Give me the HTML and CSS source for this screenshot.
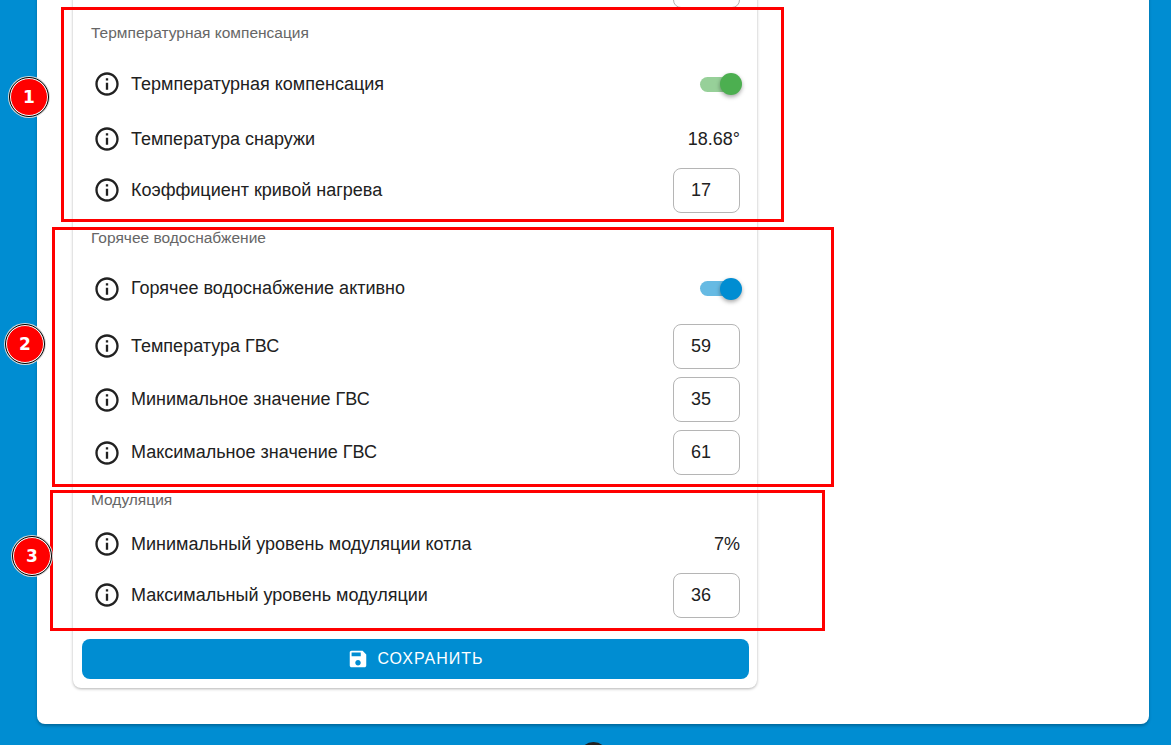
FILE: index.html
```html
<!DOCTYPE html>
<html lang="ru">
  <head>
    <meta charset="UTF-8" />
    <meta name="viewport" content="width=device-width, initial-scale=1.0" />
    <title>Настройки котла</title>
    <link rel="stylesheet" href="styles.css">
  </head>
  <body>
    <svg class="icon-defs" width="0" height="0">
      <symbol id="info" viewBox="0 0 24 24">
        <path d="M11 7h2v2h-2zm0 4h2v6h-2zm1-9C6.48 2 2 6.48 2 12s4.48 10 10 10 10-4.48 10-10S17.52 2 12 2zm0 18c-4.41 0-8-3.59-8-8s3.59-8 8-8 8 3.59 8 8-3.59 8-8 8z" />
      </symbol>
    </svg>
    <div class="panel">
      <div class="card">
        <div class="row row-input">
          <span class="row-label"></span>
          <div class="field"></div>
        </div>

        <h3 class="section-title section-first">Термпературная компенсация</h3>
        <div class="row row-switch">
          <svg class="info"><use href="#info" /></svg>
          <span class="row-label">Термпературная компенсация</span>
          <div class="switch switch-green"><span class="thumb"></span></div>
        </div>
        <div class="row row-value">
          <svg class="info"><use href="#info" /></svg>
          <span class="row-label">Температура снаружи</span>
          <span class="value">18.68°</span>
        </div>
        <div class="row row-input">
          <svg class="info"><use href="#info" /></svg>
          <span class="row-label">Коэффициент кривой нагрева</span>
          <div class="field">17</div>
        </div>

        <h3 class="section-title">Горячее водоснабжение</h3>
        <div class="row row-switch">
          <svg class="info"><use href="#info" /></svg>
          <span class="row-label">Горячее водоснабжение активно</span>
          <div class="switch switch-blue"><span class="thumb"></span></div>
        </div>
        <div class="row row-input">
          <svg class="info"><use href="#info" /></svg>
          <span class="row-label">Температура ГВС</span>
          <div class="field">59</div>
        </div>
        <div class="row row-input">
          <svg class="info"><use href="#info" /></svg>
          <span class="row-label">Минимальное значение ГВС</span>
          <div class="field">35</div>
        </div>
        <div class="row row-input">
          <svg class="info"><use href="#info" /></svg>
          <span class="row-label">Максимальное значение ГВС</span>
          <div class="field">61</div>
        </div>

        <h3 class="section-title section-last">Модуляция</h3>
        <div class="row row-value">
          <svg class="info"><use href="#info" /></svg>
          <span class="row-label">Минимальный уровень модуляции котла</span>
          <span class="value">7%</span>
        </div>
        <div class="row row-input">
          <svg class="info"><use href="#info" /></svg>
          <span class="row-label">Максимальный уровень модуляции</span>
          <div class="field">36</div>
        </div>

        <button class="save">
          <svg class="save-icon" viewBox="0 0 24 24">
            <path d="M17 3H5c-1.11 0-2 .9-2 2v14c0 1.1.89 2 2 2h14c1.1 0 2-.9 2-2V7l-4-4zm-5 16c-1.66 0-3-1.34-3-3s1.34-3 3-3 3 1.34 3 3-1.34 3-3 3zm3-10H5V5h10v4z" />
          </svg>
          Сохранить
        </button>
      </div>
    </div>

    <!-- annotations drawn over the screenshot -->
    <div class="mark mark-1"></div>
    <div class="mark mark-2"></div>
    <div class="mark mark-3"></div>
    <div class="badge badge-1">1</div>
    <div class="badge badge-2">2</div>
    <div class="badge badge-3">3</div>
    <div class="fab"></div>
  </body>
</html>
```

FILE: styles.css
```css
html,
body {
  height: 745px;
  overflow: hidden;
}
body {
  position: relative;
  margin: 0;
  background-color: #008dd2;
  font-family: "Liberation Sans", Arial, sans-serif;
  color: #212121;
}
.icon-defs {
  display: block;
}
.panel {
  box-sizing: border-box;
  width: 1112px;
  height: 784px;
  margin: -60px 0 0 37px;
  padding: 0 36px;
  background-color: #fff;
  border-radius: 8px;
  box-shadow: 0 2px 3px rgba(0, 0, 0, 0.25);
}
.card {
  box-sizing: border-box;
  width: 684px;
  height: 748px;
  padding: 18.5px 8px 9px 9px;
  background-color: #fff;
  border-radius: 8px;
  box-shadow: 0 1px 3px rgba(0, 0, 0, 0.3);
}
.section-title {
  display: flex;
  align-items: center;
  box-sizing: border-box;
  height: 41px;
  margin: 0;
  padding: 0 0 0 9px;
  font-size: 15.5px;
  font-weight: 400;
  color: #666;
}
.section-first {
  height: 41.5px;
}
.section-last {
  height: 40px;
}
.row {
  display: flex;
  align-items: center;
  padding: 0 9px 0 11px;
  font-size: 18px;
}
.row-switch {
  height: 61.5px;
}
.row-value {
  height: 49px;
}
.row-input {
  height: 53.33px;
}
.info {
  flex: none;
  width: 28px;
  height: 28px;
  margin-right: 10px;
  fill: #212121;
}
.row-label {
  flex: 1;
}
.field {
  box-sizing: border-box;
  width: 67px;
  height: 45px;
  padding-left: 17px;
  border: 1px solid #b5b5b5;
  border-radius: 8px;
  line-height: 42px;
}
.switch {
  position: relative;
  width: 40px;
  height: 15px;
  border-radius: 8px;
}
.thumb {
  position: absolute;
  top: -3.7px;
  right: -2px;
  width: 22px;
  height: 22px;
  border-radius: 50%;
  box-shadow: 0 2px 4px rgba(0, 0, 0, 0.35);
}
.switch-green {
  background-color: #97d099;
}
.switch-green .thumb {
  background-color: #4caf50;
}
.switch-blue {
  background-color: #66bae3;
}
.switch-blue .thumb {
  background-color: #008dd2;
}
.save {
  display: flex;
  align-items: center;
  justify-content: center;
  gap: 8px;
  width: 667px;
  height: 40px;
  margin-top: 16.84px;
  border: none;
  border-radius: 8px;
  background-color: #008dd2;
  color: #fff;
  font-family: inherit;
  font-size: 16px;
  letter-spacing: 1px;
  text-transform: uppercase;
}
.save-icon {
  width: 22px;
  height: 22px;
  fill: #fff;
}

/* red frames and numbers on top of the page */
.mark {
  position: absolute;
  box-sizing: border-box;
  border: 3px solid #f00;
}
.mark-1 {
  left: 61px;
  top: 7px;
  width: 723px;
  height: 215px;
}
.mark-2 {
  left: 52px;
  top: 227px;
  width: 782px;
  height: 260px;
}
.mark-3 {
  left: 50px;
  top: 490px;
  width: 775px;
  height: 141px;
}
.badge {
  position: absolute;
  box-sizing: border-box;
  width: 38px;
  height: 38px;
  border: 1px solid #fff;
  border-radius: 50%;
  outline: 1px solid #000;
  box-shadow: 0 0 0 2px #d8d8d8;
  background-color: #f00;
  color: #fff;
  font-family: "DejaVu Sans", sans-serif;
  font-size: 17px;
  font-weight: 700;
  line-height: 36px;
  text-align: center;
}
.badge-1 {
  left: 10px;
  top: 78px;
}
.badge-2 {
  left: 6px;
  top: 325px;
}
.badge-3 {
  left: 13px;
  top: 537px;
}
.fab {
  position: absolute;
  left: 579px;
  top: 742px;
  width: 29px;
  height: 29px;
  border-radius: 50%;
  background-color: #212121;
}
```
